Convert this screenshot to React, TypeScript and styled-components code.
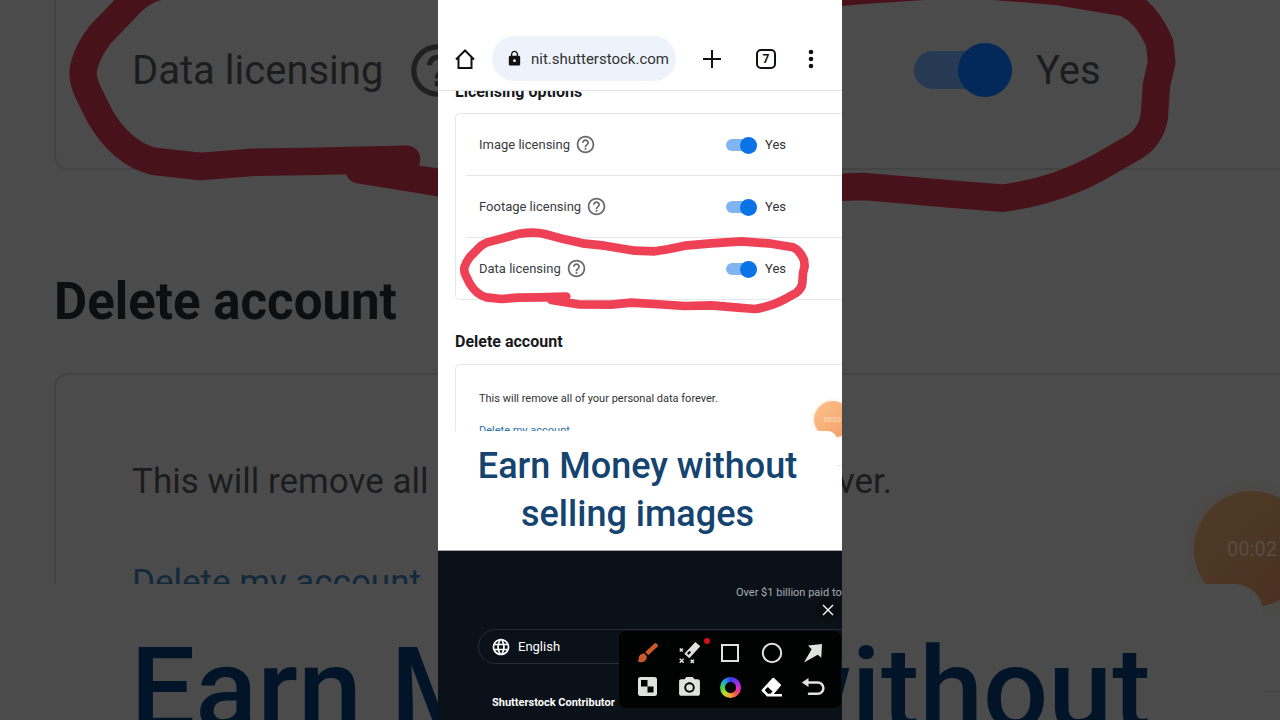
import React from 'react';
import styled, { createGlobalStyle, css } from 'styled-components';
import { MdHelpOutline, MdLock, MdLanguage, MdPhotoCamera } from 'react-icons/md';

const GlobalStyle = createGlobalStyle`
  *, *::before, *::after { box-sizing: border-box; }
  body { margin: 0; background: #4b4b4b; font-family: Roboto, "Liberation Sans", sans-serif; }
  h1, h2, p { margin: 0; }
  button { padding: 0; border: 0; background: none; color: inherit; font: inherit; display: flex; align-items: center; justify-content: center; }
`;

const Stage = styled.main`
  position: relative;
  display: flex;
  justify-content: center;
  min-height: 100vh;
  overflow: hidden;
`;

/* enlarged, dimmed copy of the screen that fills the area behind the phone */
const Backdrop = styled.section`
  position: absolute;
  inset: 0;
  overflow: hidden;
  display: flex;
  flex-direction: column;
  color: #1b1c1e;
`;

const Phone = styled.section`
  position: relative;
  flex: 0 1 404px;
  display: flex;
  flex-direction: column;
  overflow: hidden;
  background: #fff;
  color: #303134;
`;

const TopBar = styled.header`
  display: flex;
  align-items: center;
  height: 91px;
  padding: 27px 20px 0 16px;
  border-bottom: 1px solid #dfe2e3;
  color: #111;
`;

const BarButton = styled.button<{ $gap: number }>`
  flex: none;
  width: 22px;
  height: 22px;
  margin-left: ${p => p.$gap}px;
`;

const Address = styled.label`
  display: flex;
  align-items: center;
  gap: 8px;
  flex: 0 1 184px;
  min-width: 0;
  height: 45px;
  margin-left: 16px;
  padding-left: 14px;
  border-radius: 23px;
  background: #eef2fa;
`;

const AddressInput = styled.input`
  flex: 1;
  width: 0;
  min-width: 0;
  padding: 0;
  border: 0;
  background: none;
  color: #303134;
  font: 15px Roboto, "Liberation Sans", sans-serif;
`;

const TabCount = styled.span`
  display: flex;
  align-items: center;
  justify-content: center;
  width: 20px;
  height: 20px;
  border: 2px solid #111;
  border-radius: 5px;
  font-size: 12px;
  font-weight: 700;
`;

const Page = styled.div<{ $big?: boolean }>`
  position: relative;
  flex: none;
  height: ${p => (p.$big ? 584 : 340)}px;
  overflow: hidden;
  padding-left: ${p => (p.$big ? 54 : 17)}px;
`;

const Heading = styled.h2<{ $big?: boolean; $first?: boolean }>`
  font-weight: 700;
  color: ${p => (p.$big ? '#0d0e10' : '#17191c')};
  font-size: ${p => (p.$big ? 51 : 16)}px;
  line-height: ${p => (p.$big ? 60 : 20)}px;
  margin: ${p => (p.$big ? '102px 0 41px' : p.$first ? '-9px 0 11px' : '32px 0 12px')};
`;

const Card = styled.div<{ $big?: boolean; $open?: boolean }>`
  border: solid ${p => (p.$big ? '#434343' : '#e6e7e8')};
  border-width: ${p => (p.$big ? '2px 0 2px 2px' : '1px 0 1px 1px')};
  border-radius: ${p => (p.$big ? '14px 0 0 14px' : '5px 0 0 5px')};
  padding-left: ${p => (p.$big ? 32 : 10)}px;
  ${p => p.$open && css`margin-top: -30px;`}
`;

const OptionRow = styled.div<{ $big?: boolean }>`
  box-sizing: content-box;
  display: flex;
  align-items: center;
  height: ${p => (p.$big ? 196 : 61)}px;
  padding-left: ${p => (p.$big ? 44 : 13)}px;
  font-size: ${p => (p.$big ? 40 : 13)}px;
  & + & { border-top: 1px solid #e6e7e8; }
`;

const OptionName = styled.div<{ $big?: boolean }>`
  display: flex;
  align-items: center;
  gap: ${p => (p.$big ? 23 : 5)}px;
  width: ${p => (p.$big ? 782 : 247)}px;
  color: ${p => (p.$big ? '#1b1c1e' : '#3a3b3e')};
`;

const HelpButton = styled.button<{ $big?: boolean }>`
  color: ${p => (p.$big ? '#202020' : '#68696b')};
`;

const SwitchLabel = styled.label<{ $big?: boolean }>`
  display: flex;
  align-items: center;
  gap: ${p => (p.$big ? 24 : 8)}px;
`;

const SwitchInput = styled.input<{ $big?: boolean }>`
  appearance: none;
  margin: 0;
  position: relative;
  width: ${p => (p.$big ? 98 : 31)}px;
  height: ${p => (p.$big ? 38 : 12)}px;
  border-radius: ${p => (p.$big ? 19 : 6)}px;
  background: ${p => (p.$big ? '#263a53' : '#81b5f2')};
  &::after {
    content: '';
    position: absolute;
    right: 0;
    top: ${p => (p.$big ? -8 : -2)}px;
    width: ${p => (p.$big ? 54 : 17)}px;
    height: ${p => (p.$big ? 54 : 17)}px;
    border-radius: 50%;
    background: ${p => (p.$big ? '#02295a' : '#0b73e8')};
  }
`;

const Note = styled.p<{ $big?: boolean }>`
  padding: ${p => (p.$big ? '85px 0 0 44px' : '24px 0 0 13px')};
  font-size: ${p => (p.$big ? 35 : 11)}px;
  line-height: ${p => (p.$big ? 44 : 20)}px;
  white-space: nowrap;
`;

const AccountLink = styled.a<{ $big?: boolean }>`
  display: block;
  margin: ${p => (p.$big ? '57px 0 60px 44px' : '12px 0 20px 13px')};
  font-size: ${p => (p.$big ? 35 : 11)}px;
  line-height: ${p => (p.$big ? 44 : 20)}px;
  color: ${p => (p.$big ? '#12293c' : '#2b70a5')};
  text-decoration: none;
`;

const Marker = styled.svg<{ $big?: boolean }>`
  position: absolute;
  left: 0;
  top: ${p => (p.$big ? -84 : 129)}px;
  width: ${p => (p.$big ? 1280 : 404)}px;
  height: ${p => (p.$big ? 444 : 140)}px;
  pointer-events: none;
`;

const Bubble = styled.div<{ $big?: boolean }>`
  position: absolute;
  display: flex;
  align-items: center;
  justify-content: center;
  border-radius: 50%;
  ${p => p.$big ? css`
    top: 491px; right: -30px; width: 116px; height: 116px;
    font-size: 20px; color: #5a4c41;
    background: linear-gradient(135deg, #4e3c28, #4a2f20);
    box-shadow: 0 0 10px #50463e;
  ` : css`
    top: 401px; right: -9px; width: 37px; height: 37px;
    font-size: 7px; color: #ffe2cc;
    background: linear-gradient(135deg, #fcc38a, #f59c68);
    box-shadow: 0 0 4px #fde3d0;
  `}
`;

const CaptionBand = styled.div<{ $big?: boolean }>`
  position: relative;
  ${p => p.$big && css`flex: 1;`}
  padding-right: ${p => (p.$big ? 17 : 5)}px;
  &::after {
    content: '';
    position: absolute;
    right: 0;
    top: ${p => (p.$big ? 107 : 34)}px;
    width: ${p => (p.$big ? 16 : 5)}px;
    height: 1px;
    background: ${p => (p.$big ? '#404040' : '#e6e7e8')};
  }
`;

const Caption = styled.h1<{ $big?: boolean }>`
  font-weight: 500;
  text-align: center;
  color: ${p => (p.$big ? '#021428' : '#14446f')};
  background: ${p => (p.$big ? '#4b4b4b' : '#fff')};
  font-size: ${p => (p.$big ? 115 : 36)}px;
  line-height: ${p => (p.$big ? 152 : 48)}px;
  height: ${p => (p.$big ? '100%' : '119px')};
  padding: ${p => (p.$big ? '30px 0 0 18px' : '11px 0 0 0')};
  border-radius: ${p => (p.$big ? '0 28px 0 0' : '0 9px 0 0')};
`;

const Footer = styled.footer`
  flex: 1;
  border-top: 1px solid #a3a8ab;
  background: #0b1119;
  color: #fff;
  overflow: hidden;
`;

const Payout = styled.p`
  margin: 32px 0 0 298px;
  font-size: 11px;
  line-height: 20px;
  color: #a9adb2;
  white-space: nowrap;
`;

const LanguageButton = styled.button`
  && {
    justify-content: flex-start;
    gap: 7px;
    width: 100%;
    height: 35px;
    margin: 26px 0 0 40px;
    padding-left: 12px;
    border: 1px solid #262c33;
    border-radius: 18px;
    font-size: 13px;
  }
`;

const FooterTitle = styled.p`
  margin: 29px 0 0 54px;
  font-size: 11px;
  font-weight: 700;
  line-height: 20px;
`;

const CloseButton = styled.button`
  && {
    position: absolute;
    right: 2px;
    top: 598px;
    width: 24px;
    height: 24px;
    border-radius: 50%;
    background: #0a0d11;
    color: #fff;
  }
`;

const Tools = styled.div`
  position: absolute;
  right: 1px;
  top: 631px;
  display: grid;
  grid-template-columns: repeat(5, 1fr);
  grid-auto-rows: 34px;
  width: 222px;
  height: 77px;
  padding: 5px 7px 4px 8px;
  border-radius: 7px;
  background: #000301;
  color: #e0e2df;
`;

const ToolButton = styled.button`
  position: relative;
`;

const NewDot = styled.span`
  position: absolute;
  right: 0;
  top: 2px;
  width: 6px;
  height: 6px;
  border-radius: 50%;
  background: #d8101c;
`;

const ColorRing = styled.span`
  width: 21px;
  height: 21px;
  border-radius: 50%;
  background: radial-gradient(circle, #000301 5px, transparent 6px),
    conic-gradient(#3a3af0, #8a2ff0 50deg, #e02fc0 95deg, #f04a50 135deg, #f5a030 180deg, #b8d830 225deg, #40d050 270deg, #20a8d8 315deg, #3a3af0);
`;

const markPath =
  'M385 230 L300 232 L240 233 L190 237 L145 232 Q115 224 95 190 L84 168 Q76 152 80 140 Q84 126 95 112 L120 86 Q130 74 145 68 L190 56 L245 41 Q290 34 320 42 L380 58 L440 71 L500 77 L590 92 L650 94 L690 88 L740 77 L820 70 L910 64 L1000 71 L1065 82 Q1085 90 1098 120 L1100 138 L1095 160 L1093 190 Q1090 208 1075 218 L1040 238 Q1000 260 950 267 L900 263 L820 256 L740 258 L650 252 L580 248 L520 254 L420 253 L340 240';

function RedMark({ big }: { big?: boolean }) {
  return (
    <Marker $big={big} viewBox="0 0 1212 420" fill="none" aria-hidden="true">
      <path d={markPath} stroke={big ? '#47121a' : '#ef4155'} strokeWidth="26" strokeLinecap="round" strokeLinejoin="round" />
    </Marker>
  );
}

function Option({ name, big }: { name: string; big?: boolean }) {
  return (
    <OptionRow $big={big}>
      <OptionName $big={big}>
        {name}
        <HelpButton $big={big} aria-label={`About ${name}`}>
          <MdHelpOutline size={big ? 63 : 21} />
        </HelpButton>
      </OptionName>
      <SwitchLabel $big={big}>
        <SwitchInput $big={big} type="checkbox" role="switch" defaultChecked aria-label={name} />
        Yes
      </SwitchLabel>
    </OptionRow>
  );
}

function DeleteCard({ big }: { big?: boolean }) {
  return (
    <>
      <Heading $big={big}>Delete account</Heading>
      <Card $big={big}>
        <Note $big={big}>This will remove all of your personal data forever.</Note>
        <AccountLink $big={big} href="#delete">Delete my account</AccountLink>
      </Card>
    </>
  );
}

const tools: { label: string; icon: React.ReactNode; dot?: boolean }[] = [
  {
    label: 'Brush',
    icon: (
      <svg width="22" height="22" viewBox="0 0 22 22" fill="#c9592a">
        <path d="M17.7 1.3Q18.5.8 19.200 1.300L20.800 2.900Q21.300 3.700 20.700 4.400L11.300 13.200 8.200 9.900Z" />
        <path d="M7.400 11.600 9.800 14.200C10 18.600 6.600 21.400 .7 19.800 1.800 19 1.600 17.800 1.700 15.800 2.100 12.600 4.800 11 7.400 11.600Z" />
      </svg>
    ),
  },
  {
    label: 'Magic brush',
    dot: true,
    icon: (
      <svg width="24" height="24" viewBox="0 0 24 24" fill="none" stroke="currentColor">
        <path d="M18.300 1 23.300 5.300 12.300 17.300 7.300 12.700Z" fill="currentColor" stroke="none" />
        <path d="M10.800 13.300 13.300 10.600" stroke="#000301" strokeWidth="2.200" />
        <path d="M2.800 7.500l3 3M5.800 7.500l-3 3M2.700 17.700l4 4M6.700 17.700l-4 4M13.700 18.700l3.200 3.200M16.900 18.700l-3.200 3.200" strokeWidth="1.500" />
      </svg>
    ),
  },
  {
    label: 'Rectangle',
    icon: (
      <svg width="20" height="20" viewBox="0 0 20 20" fill="none" stroke="currentColor" strokeWidth="2">
        <rect x="2" y="2" width="16" height="16" />
      </svg>
    ),
  },
  {
    label: 'Ellipse',
    icon: (
      <svg width="22" height="22" viewBox="0 0 22 22" fill="none" stroke="currentColor" strokeWidth="2">
        <circle cx="11" cy="11" r="9.200" />
      </svg>
    ),
  },
  {
    label: 'Arrow',
    icon: (
      <svg width="20" height="20" viewBox="0 0 20 20" fill="currentColor">
        <path d="M19 1 18.300 14.800 14.800 11.800 1 19.500 8.600 6.200 5 2.400Z" />
      </svg>
    ),
  },
  {
    label: 'Mosaic',
    icon: (
      <svg width="20" height="20" viewBox="0 0 20 20" fill="currentColor">
        <rect x="0" y="0" width="19" height="19" rx="2.500" />
        <path d="M3 3h6.500v6.500H3zM9.500 9.500h6v6h-6z" fill="#000301" />
      </svg>
    ),
  },
  { label: 'Screenshot', icon: <MdPhotoCamera size={25} /> },
  { label: 'Colour', icon: <ColorRing /> },
  {
    label: 'Eraser',
    icon: (
      <svg width="22" height="20" viewBox="0 0 22 20" fill="#fff">
        <path d="M11.500 .9Q12.300.4 13 1L19.800 7.400Q20.300 8.100 19.800 8.800L12.800 17H21V19.500H6L.9 14.200Q.2 13.200 1 12.400Z" />
        <path d="M6.800 10 11.600 14.400 9.400 16.800H7L4.200 13.700Q3.700 13 4.200 12.500Z" fill="#000301" />
      </svg>
    ),
  },
  {
    label: 'Undo',
    icon: (
      <svg width="24" height="20" viewBox="0 0 24 20" fill="none" stroke="currentColor" strokeWidth="2.500">
        <path d="M6 5.500H16.800A5.600 5.600 0 0 1 16.800 16.700H8" strokeLinecap="round" />
        <path d="M7.500 1V10L.8 5.500Z" fill="currentColor" stroke="none" />
      </svg>
    ),
  },
];

export default function App() {
  return (
    <Stage>
      <GlobalStyle />
      <Backdrop aria-hidden="true">
        <Page $big>
          <Card $big $open>
            <Option big name="Data licensing" />
          </Card>
          <DeleteCard big />
          <RedMark big />
        </Page>
        <Bubble $big>00:02</Bubble>
        <CaptionBand $big>
          <Caption as="p" $big>Earn Money without</Caption>
        </CaptionBand>
      </Backdrop>

      <Phone>
        <TopBar>
          <BarButton $gap={0} aria-label="Home">
            <svg width="22" height="22" viewBox="0 0 22 22" fill="none" stroke="currentColor" strokeWidth="2">
              <path d="M2 11.500 11 2.500 20 11.500M4.500 9.500V20H17.500V9.500" />
            </svg>
          </BarButton>
          <Address>
            <MdLock size={17} />
            <AddressInput aria-label="Address" defaultValue="nit.shutterstock.com" />
          </Address>
          <BarButton $gap={25} aria-label="New tab">
            <svg width="20" height="20" viewBox="0 0 20 20" stroke="currentColor" strokeWidth="2">
              <path d="M10 1V19M1 10H19" />
            </svg>
          </BarButton>
          <BarButton $gap={32} aria-label="Open tabs">
            <TabCount>7</TabCount>
          </BarButton>
          <BarButton $gap={23} aria-label="More">
            <svg width="6" height="20" viewBox="0 0 6 20" fill="currentColor">
              <circle cx="3" cy="3" r="2.300" />
              <circle cx="3" cy="10" r="2.300" />
              <circle cx="3" cy="17" r="2.300" />
            </svg>
          </BarButton>
        </TopBar>
        <Page>
          <Heading $first>Licensing options</Heading>
          <Card>
            <Option name="Image licensing" />
            <Option name="Footage licensing" />
            <Option name="Data licensing" />
          </Card>
          <DeleteCard />
          <RedMark />
        </Page>
        <Bubble>00:02</Bubble>
        <CaptionBand>
          <Caption>
            Earn Money without
            <br />
            selling images
          </Caption>
        </CaptionBand>
        <Footer>
          <Payout>Over $1 billion paid to</Payout>
          <LanguageButton>
            <MdLanguage size={20} />
            English
          </LanguageButton>
          <FooterTitle>Shutterstock Contributor</FooterTitle>
        </Footer>
        <CloseButton aria-label="Close tools">
          <svg width="12" height="12" viewBox="0 0 12 12" stroke="currentColor" strokeWidth="1.400">
            <path d="M1 1 11 11M11 1 1 11" />
          </svg>
        </CloseButton>
        <Tools>
          {tools.map(t => (
            <ToolButton key={t.label} aria-label={t.label}>
              {t.icon}
              {t.dot && <NewDot />}
            </ToolButton>
          ))}
        </Tools>
      </Phone>
    </Stage>
  );
}
